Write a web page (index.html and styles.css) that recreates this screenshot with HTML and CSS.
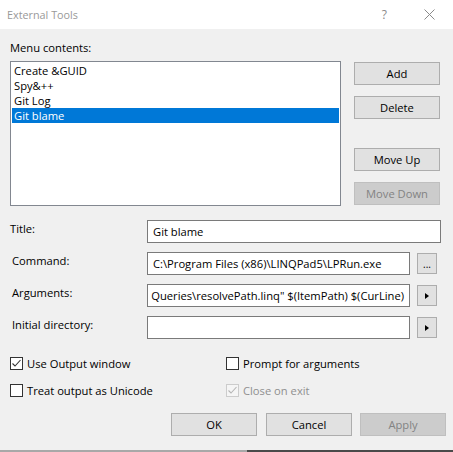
FILE: index.html
```html
<!DOCTYPE html>
<html>
<head>
<meta charset="utf-8">
<link rel="stylesheet" href="styles.css">
</head>
<body>
<div class="window">
  <div class="titlebar">
    <span class="title">External Tools</span>
    <span class="help">?</span>
    <svg class="close" width="11" height="11" viewBox="0 0 11 11"><path d="M0.5 0.5 L10.5 10.5 M10.5 0.5 L0.5 10.5" stroke="#8a8a8a" stroke-width="1" fill="none"/></svg>
  </div>
  <div class="body">
    <div class="menu-label">Menu contents:</div>
    <div class="list-section">
      <div class="listbox">
        <div class="item">Create &amp;GUID</div>
        <div class="item">Spy&amp;++</div>
        <div class="item">Git Log</div>
        <div class="item selected">Git blame</div>
      </div>
      <div class="side-buttons">
        <div class="btn">Add</div>
        <div class="btn gap-s">Delete</div>
        <div class="btn gap-l">Move Up</div>
        <div class="btn gap-s disabled">Move Down</div>
      </div>
    </div>
    <div class="form">
      <div class="row">
        <div class="label label-title">Title:</div>
        <div class="field"><span>Git blame</span></div>
      </div>
      <div class="row">
        <div class="label">Command:</div>
        <div class="field"><span>C:\Program Files (x86)\LINQPad5\LPRun.exe</span></div>
        <div class="small-btn dots">...</div>
      </div>
      <div class="row">
        <div class="label">Arguments:</div>
        <div class="field scrolled"><span class="clip-text">Queries\resolvePath.linq" $(ItemPath) $(CurLine)</span></div>
        <div class="small-btn"><span class="tri"></span></div>
      </div>
      <div class="row">
        <div class="label">Initial directory:</div>
        <div class="field"></div>
        <div class="small-btn"><span class="tri"></span></div>
      </div>
    </div>
    <div class="checks">
      <div class="check">
        <span class="box"><svg width="11" height="11" viewBox="0 0 11 11"><path d="M1.5 5.5 L4 8 L9.5 2" stroke="#333" stroke-width="1.1" fill="none"/></svg></span>
        <span>Use Output window</span>
      </div>
      <div class="check">
        <span class="box"></span>
        <span>Prompt for arguments</span>
      </div>
      <div class="check">
        <span class="box"></span>
        <span>Treat output as Unicode</span>
      </div>
      <div class="check disabled">
        <span class="box"><svg width="11" height="11" viewBox="0 0 11 11"><path d="M1.5 5.5 L4 8 L9.5 2" stroke="#b5b5b5" stroke-width="1.1" fill="none"/></svg></span>
        <span>Close on exit</span>
      </div>
    </div>
    <div class="actions">
      <div class="btn">OK</div>
      <div class="btn">Cancel</div>
      <div class="btn disabled">Apply</div>
    </div>
  </div>
  <div class="edge"><div class="edge-left"></div><div class="edge-right"></div></div>
</div>
</body>
</html>
```

FILE: styles.css
```css
html, body {
  margin: 0;
  padding: 0;
}
body {
  width: 453px;
  height: 452px;
  overflow: hidden;
  background: #f0f0f0;
  font-family: "Open Sans", "Noto Sans", sans-serif;
  font-size: 11.2px;
  color: #000;
}
.window {
  display: flex;
  flex-direction: column;
  height: 452px;
}
.titlebar {
  height: 29px;
  background: #fff;
  display: flex;
  align-items: center;
  flex-shrink: 0;
}
.title {
  padding-left: 7px;
  color: #999;
  font-size: 10.8px;
  flex: 1;
}
.help {
  color: #8a8a8a;
  font-size: 12px;
  margin-right: 37px;
}
.close {
  margin-right: 18px;
}
.body {
  flex: 1;
  padding: 0 12px 0 10px;
  display: flex;
  flex-direction: column;
}
.menu-label {
  line-height: 16px;
  padding-top: 11px;
  margin-bottom: 5px;
}
.list-section {
  display: flex;
  gap: 13px;
}
.listbox {
  width: 331px;
  height: 145px;
  box-sizing: border-box;
  border: 1px solid #828790;
  background: #fff;
  padding: 1px;
}
.item {
  height: 15px;
  line-height: 15px;
  padding-left: 2px;
  white-space: nowrap;
}
.item.selected {
  background: #0078d7;
  color: #fff;
}
.side-buttons {
  display: flex;
  flex-direction: column;
  padding-top: 1px;
}
.btn {
  width: 86px;
  height: 23px;
  box-sizing: border-box;
  border: 1px solid #adadad;
  background: #e1e1e1;
  display: flex;
  align-items: center;
  justify-content: center;
}
.btn.disabled {
  background: #cccccc;
  border-color: #bfbfbf;
  color: #838383;
}
.gap-s { margin-top: 11px; }
.gap-l { margin-top: 29px; }
.form {
  margin-top: 14px;
  display: flex;
  flex-direction: column;
  gap: 9px;
}
.row {
  display: flex;
  align-items: flex-start;
}
.label {
  width: 135px;
  padding-left: 2px;
  line-height: 17px;
  flex-shrink: 0;
}
.label-title {
  padding-left: 0;
  width: 137px;
}
.field {
  flex: 1;
  min-width: 0;
  height: 23px;
  box-sizing: border-box;
  border: 1px solid #7a7a7a;
  background: #fff;
  padding: 0 5px;
  display: flex;
  align-items: center;
  overflow: hidden;
  white-space: nowrap;
}
.field.scrolled {
  justify-content: flex-end;
  padding-left: 0;
}
.clip-text {
  margin-left: -3px;
}
.small-btn {
  width: 20px;
  height: 21px;
  box-sizing: border-box;
  margin: 1px 4px 0 7px;
  border: 1px solid #adadad;
  background: #e1e1e1;
  display: flex;
  align-items: center;
  justify-content: center;
  flex-shrink: 0;
}
.dots {
  align-items: flex-end;
  line-height: 14px;
  font-size: 10px;
  padding-bottom: 2px;
}
.tri {
  width: 0;
  height: 0;
  border-top: 3.5px solid transparent;
  border-bottom: 3.5px solid transparent;
  border-left: 4px solid #000;
}
.checks {
  margin-top: 18px;
  display: grid;
  grid-template-columns: 216px 1fr;
  row-gap: 14px;
}
.check {
  display: flex;
  align-items: center;
  gap: 4px;
  height: 13px;
  white-space: nowrap;
}
.box {
  width: 13px;
  height: 13px;
  box-sizing: border-box;
  border: 1px solid #333;
  background: #fff;
  display: flex;
  align-items: center;
  justify-content: center;
  flex-shrink: 0;
}
.check.disabled {
  color: #8f8f8f;
}
.check.disabled .box {
  border-color: #cccccc;
  background: #f5f5f5;
}
.actions {
  margin-top: 16px;
  margin-right: -5px;
  display: flex;
  justify-content: flex-end;
  gap: 8px;
}
.actions .btn:first-child {
  margin-right: 1px;
}
.edge {
  height: 2px;
  display: flex;
  flex-shrink: 0;
}
.edge-left {
  width: 247px;
  background: #a8a8a8;
}
.edge-right {
  flex: 1;
  background: #4a4a4a;
}
```
